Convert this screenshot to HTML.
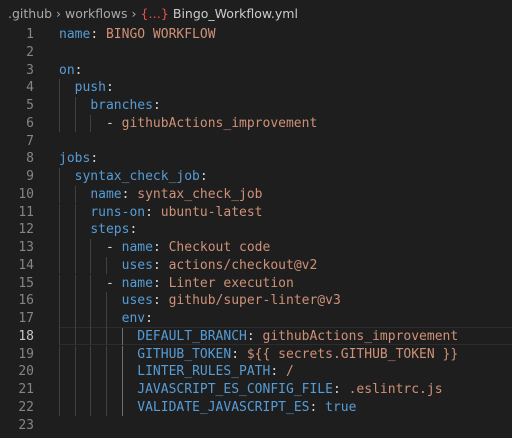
<!DOCTYPE html>
<html><head><meta charset="utf-8"><style>
html,body{margin:0;padding:0;background:#1e1e1e;width:512px;height:438px;overflow:hidden}
.bc{position:absolute;left:8px;top:6px;font:12.5px "DejaVu Sans","Liberation Sans",sans-serif;color:#a9a9a9;white-space:pre}
.bc .br{color:#e8504a}
.bc .f{color:#cccccc}
.ln{position:absolute;left:0;width:34px;text-align:right;font:13px "DejaVu Sans Mono",monospace;color:#858585;line-height:17.7px}
.ln.a{color:#c6c6c6}
.c{position:absolute;left:59px;font:13px "DejaVu Sans Mono",monospace;color:#d4d4d4;white-space:pre;line-height:17.7px}
.k{color:#569cd6}.s{color:#ce9178}
.g{position:absolute;width:1px;background:#404040;height:17.7px}
.hl{position:absolute;left:59px;right:0;top:327px;height:16px;border-top:1px solid #2c2c2c;border-bottom:1px solid #2c2c2c}
</style></head><body>
<div class="bc">.github <span>›</span> workflows <span>›</span> <span class="br">{…}</span> <span class="f">Bingo_Workflow.yml</span></div>
<div class="hl"></div>
<div id="root"></div>
<script>
var L=[
[0,'<span class="k">name</span>: <span class="s">BINGO WORKFLOW</span>'],
[0,''],
[0,'<span class="k">on</span>:'],
[2,'<span class="k">push</span>:'],
[4,'<span class="k">branches</span>:'],
[6,'- <span class="s">githubActions_improvement</span>'],
[0,''],
[0,'<span class="k">jobs</span>:'],
[2,'<span class="k">syntax_check_job</span>:'],
[4,'<span class="k">name</span>: <span class="s">syntax_check_job</span>'],
[4,'<span class="k">runs-on</span>: <span class="s">ubuntu-latest</span>'],
[4,'<span class="k">steps</span>:'],
[6,'- <span class="k">name</span>: <span class="s">Checkout code</span>'],
[8,'<span class="k">uses</span>: <span class="s">actions/checkout@v2</span>'],
[6,'- <span class="k">name</span>: <span class="s">Linter execution</span>'],
[8,'<span class="k">uses</span>: <span class="s">github/super-linter@v3</span>'],
[8,'<span class="k">env</span>:'],
[10,'<span class="k">DEFAULT_BRANCH</span>: <span class="s">githubActions_improvement</span>'],
[10,'<span class="k">GITHUB_TOKEN</span>: <span class="s">${{ secrets.GITHUB_TOKEN }}</span>'],
[10,'<span class="k">LINTER_RULES_PATH</span>: <span class="s">/</span>'],
[10,'<span class="k">JAVASCRIPT_ES_CONFIG_FILE</span>: <span class="s">.eslintrc.js</span>'],
[10,'<span class="k">VALIDATE_JAVASCRIPT_ES</span>: <span class="k">true</span>'],
[0,'']];
var h='',cw=7.83;
for(var i=0;i<L.length;i++){
 var y=26+i*17.75, ind=L[i][0];
 h+='<div class="ln'+(i==17?' a':'')+'" style="top:'+y+'px">'+(i+1)+'</div>';
 for(var g=0;g<ind;g+=2){
  var col=(g==8&&i>=17)?'#707070':'#404040';
  h+='<div class="g" style="left:'+(59+g*cw)+'px;top:'+y+'px;background:'+col+'"></div>';
 }
 h+='<div class="c" style="top:'+y+'px">'+' '.repeat(ind)+L[i][1]+'</div>';
}
document.getElementById('root').innerHTML=h;
</script>
</body></html>
